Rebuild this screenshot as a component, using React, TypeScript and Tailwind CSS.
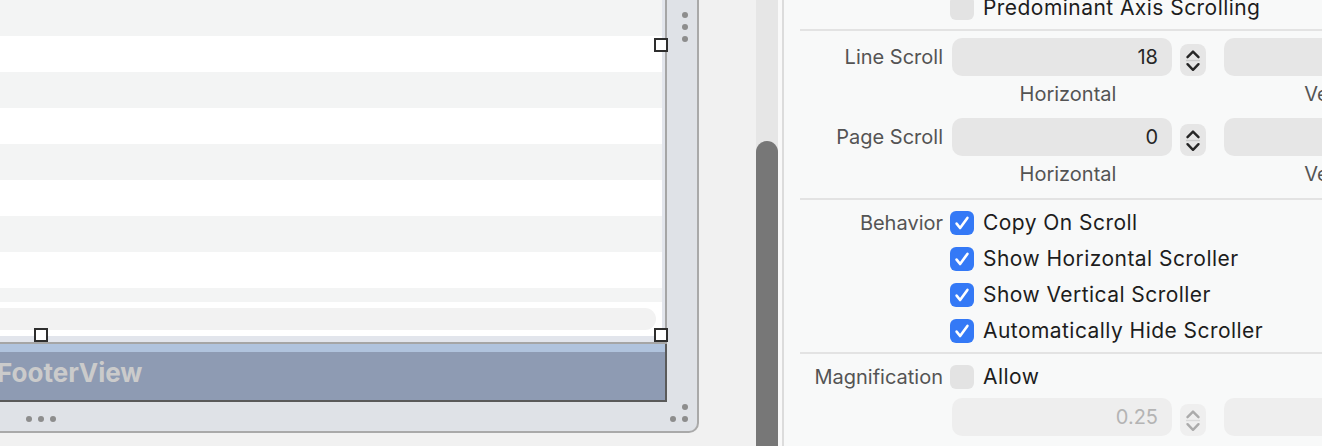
import React from "react";

const STRIPES = ["bg-[#f3f4f4]", "bg-white", "bg-[#f3f4f4]", "bg-white", "bg-[#f3f4f4]", "bg-white", "bg-[#f3f4f4]", "bg-white"];

function Dot() {
  return <span className="block w-[6px] h-[6px] rounded-full bg-[#8d8d8d] blur-[0.6px]" />;
}

function Handle({ className }: { className: string }) {
  return <div className={`absolute w-[14px] h-[14px] border-2 border-[#2e2e2e] bg-white ${className}`} />;
}

function Checkbox({ on, label }: { on: boolean; label: string }) {
  return (
    <div className="flex items-center gap-[9px] ml-[7px]">
      {on ? (
        <span className="w-6 h-6 shrink-0 rounded-[6px] bg-[#3479f6] flex items-center justify-center">
          <svg width="24" height="24" viewBox="0 0 24 24">
            <path d="M6.6 12.6 L10.1 17 L17.4 6.9" fill="none" stroke="white" strokeWidth="2.6" strokeLinecap="round" strokeLinejoin="round" />
          </svg>
        </span>
      ) : (
        <span className="w-6 h-6 shrink-0 rounded-[6px] bg-[#e3e3e3]" />
      )}
      <span className="text-[21px] leading-6 tracking-[0.45px] text-[#1d1d1d] whitespace-nowrap">{label}</span>
    </div>
  );
}

function Stepper({ disabled = false }: { disabled?: boolean }) {
  const stroke = disabled ? "#ababab" : "#262626";
  return (
    <div className={`ml-[8px] w-[26px] h-[32px] rounded-[8px] shrink-0 self-end ${disabled ? "bg-[#efefef]" : "bg-[#e6e6e6]"}`}>
      <svg width="26" height="32" viewBox="0 0 26 32">
        <polyline points="7.5,13.2 13,7.6 18.5,13.2" fill="none" stroke={stroke} strokeWidth="2.4" strokeLinecap="round" strokeLinejoin="round" />
        <line x1="6" y1="16.5" x2="20" y2="16.5" stroke={disabled ? "#dadada" : "#cbcbcb"} strokeWidth="1.4" />
        <polyline points="7.5,20.2 13,25.8 18.5,20.2" fill="none" stroke={stroke} strokeWidth="2.4" strokeLinecap="round" strokeLinejoin="round" />
      </svg>
    </div>
  );
}

function NumberRow({ label, value, disabled = false, className = "" }: { label?: string; value: string; disabled?: boolean; className?: string }) {
  return (
    <div className={`flex items-center h-[38px] ${className}`}>
      <div className="w-[159px] shrink-0 text-right text-[20px] leading-6 text-[#545454]">{label}</div>
      <div
        className={`ml-[9px] w-[220px] h-[38px] shrink-0 rounded-[10px] flex items-center justify-end pr-[14px] text-[20px] ${
          disabled ? "bg-[#eeeeee] text-[#b4b4b4]" : "bg-[#e6e6e6] text-[#262626]"
        }`}
      >
        {value}
      </div>
      <Stepper disabled={disabled} />
      <div className={`ml-[18px] w-[220px] h-[38px] shrink-0 rounded-[10px] ${disabled ? "bg-[#eeeeee]" : "bg-[#e6e6e6]"}`} />
    </div>
  );
}

function AxisLabels({ className = "" }: { className?: string }) {
  return (
    <div className={`flex pl-[168px] text-[20px] leading-6 text-[#545454] ${className}`}>
      <div className="w-[232px] shrink-0 text-center">Horizontal</div>
      <div className="ml-[40px] w-[232px] shrink-0 text-center">Vertical</div>
    </div>
  );
}

function Separator({ className = "" }: { className?: string }) {
  return <div className={`ml-[16px] h-[2px] bg-[#e3e3e3] ${className}`} />;
}

export default function App() {
  return (
    <div className="w-[1322px] h-[446px] flex overflow-hidden font-[Inter,'Noto_Sans',sans-serif]">
      {/* canvas */}
      <div className="relative w-[756px] h-full shrink-0 bg-[#f1f1f1]">
        <div className="w-[699px] h-[433px] flex flex-col bg-[#dfe2e7] border-r-2 border-b-2 border-[#a9a9a9] rounded-br-[10px]">
          <div className="flex">
            <div className="w-[667px] flex flex-col">
              {/* scroll view */}
              <div className="h-[344px] bg-[#e2e5ec] border-r-2 border-b-2 border-[#a5a5a5] pr-[3px] pb-[6px]">
                <div className="h-full flex flex-col">
                  {STRIPES.map((c, i) => (
                    <div key={i} className={`h-9 shrink-0 ${c}`} />
                  ))}
                  <div className="h-[14px] shrink-0 bg-[#f3f4f4]" />
                  <div className="flex-1 bg-white pt-[6px]">
                    <div className="h-[22px] mr-[6px] rounded-r-full bg-[#f2f2f2]" />
                  </div>
                </div>
              </div>
              {/* footer */}
              <div className="h-[58px] flex flex-col border-r-2 border-b-2 border-[#5a5a5a]">
                <div className="h-[8px] bg-[#b0c3dd]" />
                <div className="flex-1 flex items-center pb-[6px] bg-[#8e9bb3] overflow-hidden">
                  <span className="ml-[-3px] text-[26px] font-bold leading-none text-[#cbcbcb]">FooterView</span>
                </div>
              </div>
            </div>
            <div className="flex-1 flex flex-col items-start pl-[15px] pt-[12px] gap-[6px]">
              <Dot />
              <Dot />
              <Dot />
            </div>
          </div>
          <div className="flex-1 flex items-start justify-between">
            <div className="ml-[26px] mt-[14px] flex gap-[6px]">
              <Dot />
              <Dot />
              <Dot />
            </div>
            <svg className="mr-[8px] mt-[1px]" width="20" height="20" viewBox="0 0 20 20">
              <g fill="#8d8d8d" style={{ filter: "blur(0.6px)" }}>
                <circle cx="4" cy="16" r="3" />
                <circle cx="16" cy="16" r="3" />
                <circle cx="16" cy="4" r="3" />
              </g>
            </svg>
          </div>
        </div>
        <Handle className="left-[654px] top-[38px]" />
        <Handle className="left-[34px] top-[328px]" />
        <Handle className="left-[654px] top-[328px]" />
      </div>

      {/* scroller */}
      <div className="w-[22px] h-full shrink-0 flex flex-col pt-[141px] bg-[#e6e6e6]">
        <div className="flex-1 rounded-t-[11px] bg-[#777777]" />
      </div>
      <div className="w-[4px] h-full shrink-0 bg-[#f9f9f9]" />
      <div className="w-[2px] h-full shrink-0 bg-[#dcdcdc]" />

      {/* inspector */}
      <div className="flex-1 h-full overflow-hidden bg-[#f8f9f9]">
        <div className="mt-[-10px] flex flex-col">
          <div className="flex items-center h-9">
            <div className="w-[159px] shrink-0" />
            <Checkbox on={false} label="Predominant Axis Scrolling" />
          </div>
          <Separator className="mt-[3px]" />
          <NumberRow label="Line Scroll" value="18" className="mt-[7px]" />
          <AxisLabels className="mt-[6px]" />
          <NumberRow label="Page Scroll" value="0" className="mt-[12px]" />
          <AxisLabels className="mt-[6px]" />
          <Separator className="mt-[12px]" />
          <div className="mt-[5px] flex">
            <div className="w-[159px] shrink-0 h-9 flex items-center justify-end text-[20px] leading-6 text-[#545454]">Behavior</div>
            <div className="flex flex-col">
              {["Copy On Scroll", "Show Horizontal Scroller", "Show Vertical Scroller", "Automatically Hide Scroller"].map((t) => (
                <div key={t} className="h-9 flex items-center">
                  <Checkbox on label={t} />
                </div>
              ))}
            </div>
          </div>
          <Separator className="mt-[3px]" />
          <div className="mt-[5px] flex items-center h-9">
            <div className="w-[159px] shrink-0 text-right text-[20px] leading-6 text-[#545454]">Magnification</div>
            <Checkbox on={false} label="Allow" />
          </div>
          <NumberRow value="0.25" disabled className="mt-[3px]" />
        </div>
      </div>
    </div>
  );
}
